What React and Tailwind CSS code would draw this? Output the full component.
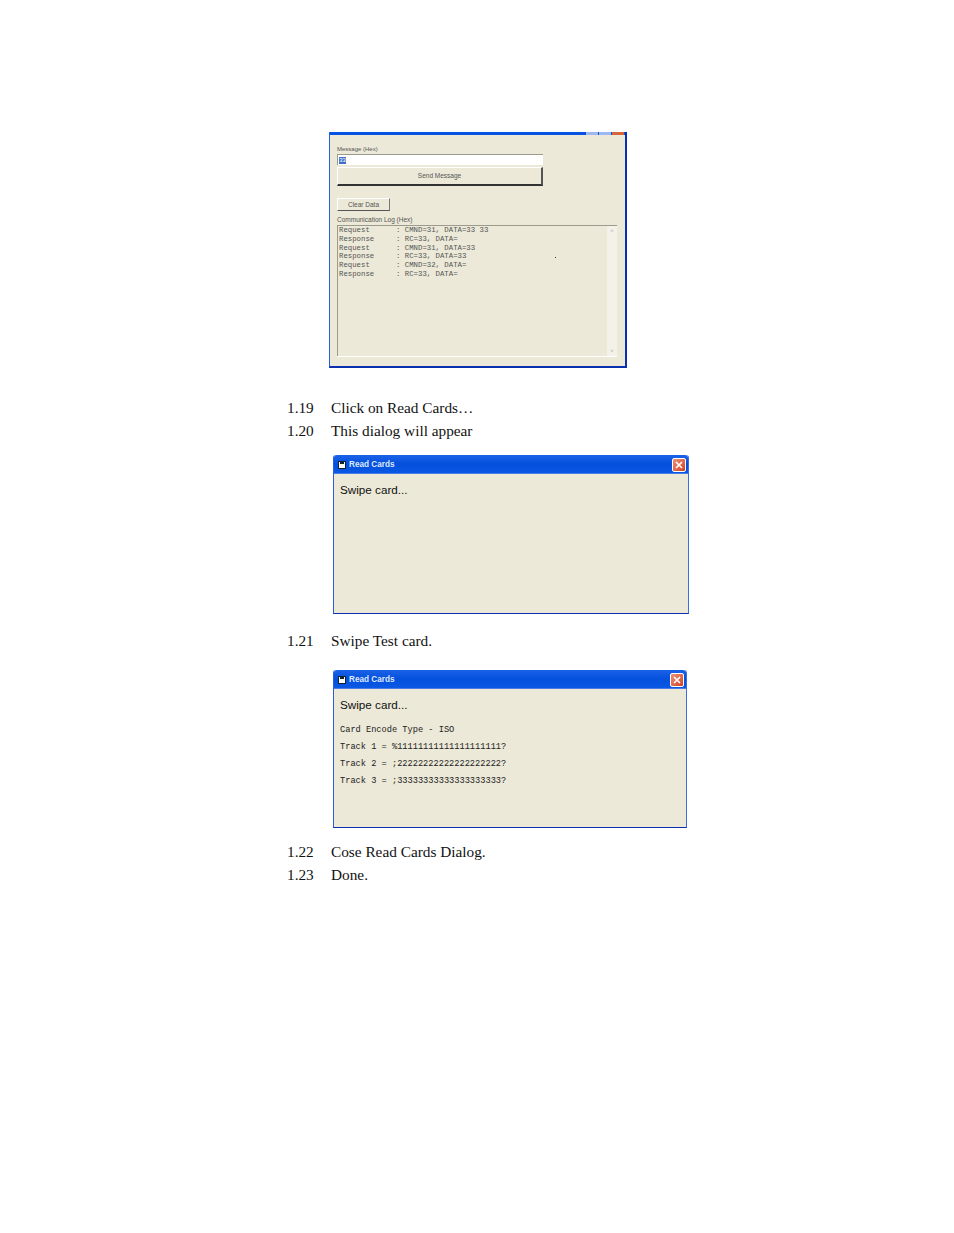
const logRows = [
  ["Request", ": CMND=31, DATA=33 33"],
  ["Response", ": RC=33, DATA="],
  ["Request", ": CMND=31, DATA=33"],
  ["Response", ": RC=33, DATA=33"],
  ["Request", ": CMND=32, DATA="],
  ["Response", ": RC=33, DATA="],
];

const tracks = [
  { text: "Card Encode Type - ISO", cls: "h-[17px]" },
  { text: "Track 1 = %11111111111111111111?", cls: "h-[17px]" },
  { text: "Track 2 = ;22222222222222222222?", cls: "h-[17px]" },
  { text: "Track 3 = ;33333333333333333333?", cls: "h-[17px]" },
];

function Step({ num, children, className = "" }) {
  return (
    <div className={`flex h-[23px] items-center font-['Liberation_Serif',serif] text-[15.3px] text-[#111] ${className}`}>
      <span className="w-[44px]">{num}</span>
      <span>{children}</span>
    </div>
  );
}

function TitleBar() {
  return (
    <div className="flex h-[19px] items-center justify-between rounded-t-[3px] border-b border-b-[#4a7ce8] bg-gradient-to-b from-[#1a62e8] via-[#0450dc] to-[#0a58e4] pr-[2px] pl-[4px]">
      <div className="flex items-center gap-[3px] pt-[2px]">
        <svg width="8" height="8" viewBox="0 0 8 8">
          <rect x="0.5" y="0.5" width="7" height="7" fill="#fff" stroke="#123" />
          <rect x="2" y="0" width="4" height="3" fill="#123" />
        </svg>
        <span className="font-['Liberation_Sans',sans-serif] text-[8.2px] font-bold text-[#dfe9ff]">Read Cards</span>
      </div>
      <div className="mt-[1px] flex h-[14px] w-[14px] items-center justify-center rounded-[2px] border border-white bg-gradient-to-br from-[#e8907a] to-[#d2401c]">
        <svg width="8" height="8" viewBox="0 0 8 8">
          <path d="M1 1 L7 7 M7 1 L1 7" stroke="#fff" strokeWidth="1.6" />
        </svg>
      </div>
    </div>
  );
}

function ReadCardsDialog({ width, height, children }) {
  return (
    <div
      className={`flex flex-col rounded-t-[3px] border-r border-b border-l border-r-[#3a6ee0] border-b-[#0a2fb0] border-l-[#2a5ce0] ${width} ${height}`}
    >
      <TitleBar />
      <div className="flex-1 bg-[#ece9d8] pt-[8px] pl-[6px]">
        <div className="h-[15px] font-['Liberation_Sans',sans-serif] text-[11.7px] leading-[15px] text-[#111]">Swipe card...</div>
        {children}
      </div>
    </div>
  );
}

function CommWindow() {
  return (
    <div className="flex h-[236px] w-[298px] flex-col border-r-[2px] border-b-[2px] border-l border-r-[#0a2fb0] border-b-[#0a2fb0] border-l-[#2a5ce0]">
      <div className="flex h-[3px] justify-end gap-[1px] bg-[#0553e0] pr-[1px]">
        <div className="h-full w-[12px] bg-[#9fb8ef]" />
        <div className="h-full w-[12px] bg-[#9fb8ef]" />
        <div className="h-full w-[12px] bg-[#d8643c]" />
      </div>
      <div className="flex flex-1 flex-col bg-[#ece9d8] pr-[8px] pl-[7px] font-['Liberation_Sans',sans-serif] text-[#555]">
        <div className="mt-[11px] h-[7px] text-[6px] leading-[7px]">Message (Hex)</div>
        <div className="mt-[1px] flex h-[11px] w-[206px] items-center border-t border-l border-t-[#9c9a8c] border-l-[#9c9a8c] bg-white pl-[1px]">
          <span className="block h-[7px] w-[7px] bg-[#3f6fc9] text-center text-[6px] leading-[7px] text-white">33</span>
        </div>
        <div className="mt-[2px] flex h-[19px] w-[206px] items-center justify-center border-t border-r-[2px] border-b-[2px] border-l border-t-[#fff] border-r-[#555] border-b-[#333] border-l-[#fff] bg-[#ece9d8] text-[6.5px]">
          Send Message
        </div>
        <div className="mt-[12px] flex h-[13px] w-[53px] items-center justify-center border-t border-r border-b border-l border-t-white border-r-[#777] border-b-[#555] border-l-white text-[6.5px]">
          Clear Data
        </div>
        <div className="mt-[5px] h-[7px] text-[6.5px] leading-[7px]">Communication Log (Hex)</div>
        <div className="relative mt-[2px] flex h-[131px] border-t border-l border-t-[#9c9a8c] border-l-[#9c9a8c]">
          <div className="flex-1 pl-[1px] font-['Liberation_Mono',monospace] text-[7.33px] leading-[8.8px] text-[#555]">
            {logRows.map(([name, value], i) => (
              <div key={i} className="flex h-[8.8px]">
                <span className="w-[57px]">{name}</span>
                <span>{value}</span>
              </div>
            ))}
          </div>
          <div className="flex w-[10px] flex-col justify-between bg-[#f3f1e8] py-[2px] text-center text-[6px] leading-[6px] text-[#aab]">
            <span>˄</span>
            <span>˅</span>
          </div>
          <div className="absolute top-[31px] left-[217px] h-px w-px bg-[#333]" />
        </div>
        <div className="h-px bg-white" />
      </div>
    </div>
  );
}

export default function App() {
  return (
    <div className="h-[1233px] w-[954px] bg-white pt-[132px] pl-[287px]">
      <div className="ml-[42px]">
        <CommWindow />
      </div>
      <Step num="1.19" className="mt-[29px]">Click on Read Cards…</Step>
      <Step num="1.20">This dialog will appear</Step>
      <div className="mt-[12px] ml-[46px]">
        <ReadCardsDialog width="w-[356px]" height="h-[159px]" />
      </div>
      <Step num="1.21" className="mt-[16px]">Swipe Test card.</Step>
      <div className="mt-[17px] ml-[46px]">
        <ReadCardsDialog width="w-[354px]" height="h-[158px]">
          <div className="mt-[10px] font-['Liberation_Mono',monospace] text-[8.67px] leading-[17px] text-[#222]">
            {tracks.map((t) => (
              <div key={t.text} className={t.cls}>{t.text}</div>
            ))}
          </div>
        </ReadCardsDialog>
      </div>
      <Step num="1.22" className="mt-[13px]">Cose Read Cards Dialog.</Step>
      <Step num="1.23">Done.</Step>
    </div>
  );
}
